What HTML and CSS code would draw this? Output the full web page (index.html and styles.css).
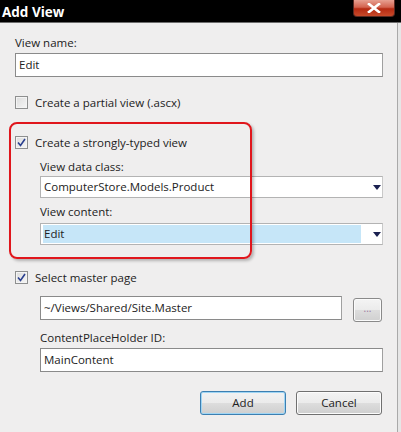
FILE: index.html
```html
<!DOCTYPE html>
<html>
<head>
<meta charset="utf-8">
<link rel="stylesheet" href="styles.css">
</head>
<body>
<div class="window">
  <div class="titlebar">
    <span class="title">Add View</span>
    <span class="close"><svg width="14" height="10" viewBox="0 0 14 10"><path d="M2 1 L12 9 M12 1 L2 9" stroke="#fff" stroke-width="2.6" stroke-linecap="square"/></svg></span>
  </div>
  <div class="body">
    <div class="label first">View name:</div>
    <div class="input wide">Edit</div>

    <div class="check-row partial"><span class="cb"></span><span>Create a partial view (.ascx)</span></div>

    <div class="check-row typed"><span class="cb checked"><svg width="9" height="9" viewBox="0 0 9 9"><path d="M1 4.5 L3.5 7.5 L8 1" fill="none" stroke="#2a3f8f" stroke-width="1.6"/></svg></span><span>Create a strongly-typed view</span></div>
    <div class="indent">
      <div class="label l-class">View data class:</div>
      <div class="select"><span class="sel-text">ComputerStore.Models.Product</span><span class="arrow"></span></div>
      <div class="label l-content">View content:</div>
      <div class="select"><span class="sel-text hl">Edit</span><span class="arrow"></span></div>
    </div>

    <div class="check-row master"><span class="cb checked"><svg width="9" height="9" viewBox="0 0 9 9"><path d="M1 4.5 L3.5 7.5 L8 1" fill="none" stroke="#2a3f8f" stroke-width="1.6"/></svg></span><span>Select master page</span></div>
    <div class="indent">
      <div class="path-row">
        <div class="input path">~/Views/Shared/Site.Master</div>
        <div class="browse">...</div>
      </div>
      <div class="label l-ph">ContentPlaceHolder ID:</div>
      <div class="input narrow">MainContent</div>
    </div>

    <div class="buttons">
      <div class="btn default">Add</div>
      <div class="btn">Cancel</div>
    </div>

    <div class="highlight"></div>
  </div>
</div>
</body>
</html>
```
FILE: styles.css
```css
* { box-sizing: border-box; }
html, body { margin: 0; padding: 0; }
body {
  width: 401px;
  height: 432px;
  overflow: hidden;
  font-family: "Open Sans", "Noto Sans", sans-serif;
  font-size: 11.5px;
  color: #222;
  background: #e6e6e6;
}
.window { width: 401px; height: 432px; display: flex; flex-direction: column; }
.titlebar {
  height: 23px;
  background: #000;
  display: flex;
  justify-content: space-between;
  align-items: flex-start;
  border-bottom: 1px solid #6d6d6d;
  padding-right: 6px;
}
.title {
  color: #fff;
  font-weight: bold;
  font-size: 13.5px;
  line-height: 15px;
  padding: 5px 0 0 2px;
}
.close {
  width: 42px;
  height: 17px;
  border: 1px solid #5a2a22;
  border-top: none;
  border-radius: 0 0 4px 4px;
  background: linear-gradient(#e7a091 0%, #d3634f 45%, #b52a12 55%, #c84a2a 100%);
  display: flex;
  align-items: center;
  justify-content: center;
}
.body {
  position: relative;
  flex: 1;
  background: #efeeee;
  width: 398px;
  border-right: 1px solid #a9a9a9;
  padding: 0 0 0 15px;
  display: flex;
  flex-direction: column;
}
.label { line-height: 15px; height: 15px; }
.label.first { margin-top: 12px; }
.input {
  height: 24px;
  width: 368px;
  background: #fff;
  border: 1px solid #8c8c8c;
  border-color: #8a8a8a #a0a0a0 #8a8a8a #8a8a8a;
  padding: 0 3px;
  line-height: 22px;
  margin-top: 3px;
}
.input.wide { width: 368px; }
.input.narrow { width: 343px; }
.check-row {
  display: flex;
  align-items: center;
  gap: 7px;
  height: 15px;
  line-height: 15px;
}
.check-row.partial { margin-top: 18px; }
.check-row.typed { margin-top: 25px; }
.check-row.master { margin-top: 25px; }
.cb {
  width: 13px;
  height: 13px;
  border: 1px solid #8e8f8f;
  background: linear-gradient(135deg, #dcdcdc, #f6f6f6);
  box-shadow: inset 0 0 0 1px #f4f4f4;
  display: flex;
  align-items: center;
  justify-content: center;
}
.indent { padding-left: 25px; display: flex; flex-direction: column; }
.l-class { margin-top: 9px; }
.l-content { margin-top: 6px; }
.l-ph { margin-top: 10px; }
.select {
  margin-top: 2px;
  width: 343px;
  height: 22px;
  background: #fff;
  border: 1px solid #b3b3b3;
  border-right-color: #c9c9c9;
  display: flex;
  align-items: center;
  padding: 1px 2px;
}
.l-content + .select { margin-top: 4px; }
.sel-text {
  flex: 0 0 318px;
  height: 18px;
  line-height: 18px;
  padding-left: 1px;
}
.sel-text.hl { background: #c6e6f8; }
.arrow {
  margin-left: 12px;
  width: 0; height: 0;
  border-left: 4px solid transparent;
  border-right: 4px solid transparent;
  border-top: 5px solid #1a2050;
}
.path-row { display: flex; align-items: flex-start; margin-top: 11px; }
.input.path { width: 302px; margin-top: 0; }
.browse {
  margin-left: 11px;
  margin-top: 2px;
  width: 29px;
  height: 24px;
  border: 1px solid #8a8a8a;
  border-radius: 3px;
  background: linear-gradient(#f4f4f4 0%, #ebebeb 50%, #dddddd 51%, #d0d0d0 100%);
  box-shadow: inset 0 0 0 1px #fbfbfb;
  color: #9a7aa0;
  font-size: 10px;
  text-align: center;
  line-height: 18px;
}
.path-row + .label { margin-top: 8px; }
.buttons {
  display: flex;
  gap: 10px;
  margin-top: 19px;
  padding-left: 185px;
}
.btn {
  width: 86px;
  height: 24px;
  border: 1px solid #707070;
  border-radius: 3px;
  background: linear-gradient(#f3f3f3 0%, #ebebeb 50%, #dddddd 51%, #cfcfcf 100%);
  box-shadow: inset 0 0 0 1px #fcfcfc;
  text-align: center;
  line-height: 22px;
  color: #222;
}
.btn.default {
  border-color: #3c7fb1;
  background: linear-gradient(#f2f2f2 0%, #ebebeb 50%, #dddddd 51%, #cfcfcf 100%);
  box-shadow: inset 0 0 0 1px #9fd5f4;
}
.highlight {
  position: absolute;
  left: 9px;
  top: 99px;
  width: 243px;
  height: 137px;
  border: 2px solid #e0161c;
  border-radius: 8px;
  box-shadow: 2px 2px 3px rgba(0,0,0,0.25);
}
```
